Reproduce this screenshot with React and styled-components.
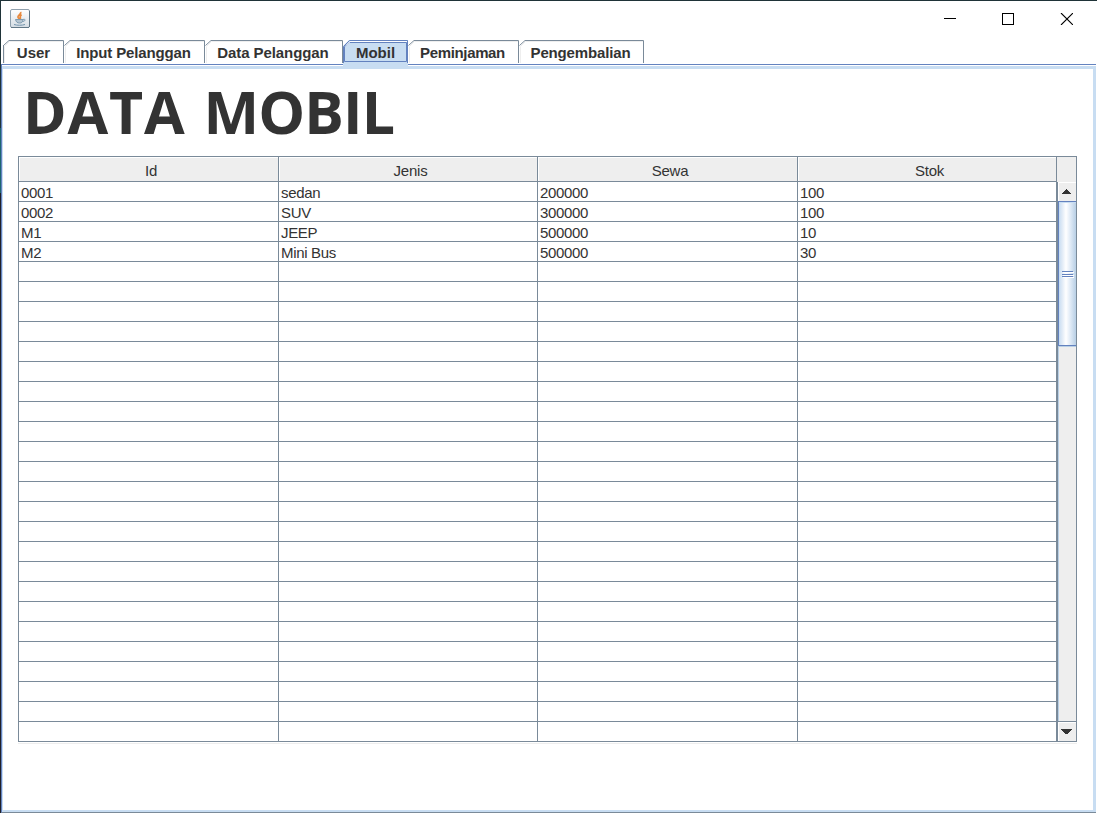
import React from "react";
import styled, { createGlobalStyle } from "styled-components";

const Global = createGlobalStyle`
  *, *::before, *::after { box-sizing: border-box; }
  html, body { margin: 0; background: #fff; overflow: hidden; }
`;

const steel = "#7a8a99";
const blue = "#6382bf";
const pale = "#c8ddf2";

const Desktop = styled.div`
  display: flex;
  width: 1097px;
  height: 813px;
  border-top: 1px solid #1f3338;
  background: #fff;
  color: #333;
  font-family: "Liberation Sans", Arial, sans-serif;
`;
const DesktopEdge = styled.div`
  width: 1px;
  background: linear-gradient(#1f3338 0 127px, #1c6670 127px 192px, #202028 192px);
`;
const Window = styled.main`
  display: flex;
  flex-direction: column;
  width: 1096px;
  height: 812px;
`;
const TitleBar = styled.header`
  display: flex;
  justify-content: space-between;
  height: 39px;
  padding: 8px 24px 0 9px;
`;
const Controls = styled.div`
  display: flex;
  gap: 46px;
  padding-top: 4px;
`;
const TabStrip = styled.nav`
  display: flex;
  height: 24px;
  padding-left: 2px;
`;
const TabBox = styled.div`
  position: relative;
  width: ${(p) => p.$w}px;
  height: ${(p) => (p.$active ? 27 : 23)}px;
  z-index: ${(p) => (p.$active ? 1 : 0)};
  padding-right: ${(p) => (p.$ls ? 2 : 0)}px;
  line-height: 26px;
  font-size: 15px;
  font-weight: 700;
  text-align: center;
  white-space: nowrap;
  svg { position: absolute; left: 0; top: 0; }
  span { position: relative; letter-spacing: ${(p) => p.$ls || 0}px; }
`;
const Pane = styled.section`
  flex: 1;
  display: flex;
  flex-direction: column;
  margin-right: 1px;
  border-top: 1px solid ${blue};
  border-left: 1px solid ${blue};
  border-bottom: 1px solid ${steel};
`;
const PaneInner = styled.div`
  flex: 1;
  margin-top: 1px;
  border: solid ${pale};
  border-width: 3px 3px 2px 1px;
  padding: 0 0 0 15px;
`;
const Heading = styled.h1`
  display: flex;
  gap: 18px;
  margin: 0;
  height: 87px;
  padding-left: 5px;
  font: 700 59px/85px "Open Sans", sans-serif;
  white-space: nowrap;
`;
const Word = styled.span`
  letter-spacing: ${(p) => p.$ls}px;
`;
const ScrollPane = styled.div`
  display: flex;
  width: 1059px;
  height: 586px;
  border-top: 1px solid ${steel};
  border-left: 1px solid ${steel};
  box-shadow: 0 1px #fff, 0 2px #eee;
`;
const Table = styled.div`
  width: 1038px;
`;
const Row = styled.div`
  display: grid;
  grid-template-columns: 260px 259px 260px 259px;
  grid-template-rows: 100%;
  height: ${(p) => (p.$head ? 25 : 20)}px;
`;
const HeadCell = styled.div`
  border-right: 1px solid ${steel};
  border-bottom: 1px solid ${steel};
  background: #eee;
  box-shadow: inset 1px 1px #fff;
  padding-left: 5px;
  text-align: center;
  font-size: 15px;
  line-height: 27px;
  letter-spacing: -0.2px;
`;
const Cell = styled.div`
  border-right: 1px solid ${steel};
  border-bottom: 1px solid ${steel};
  padding-left: 2px;
  font-size: 15px;
  line-height: 21px;
  letter-spacing: -0.33px;
  white-space: pre;
`;
const Side = styled.div`
  display: flex;
  flex-direction: column;
  width: 20px;
`;
const Corner = styled.div`
  height: 25px;
  border-right: 1px solid ${steel};
  background: #eee;
`;
const Scrollbar = styled.div`
  flex: 1;
  display: flex;
  flex-direction: column;
  border-left: 1px solid ${steel};
  border-right: 1px solid ${steel};
  background: #eee;
`;
const Arrow = styled.div`
  display: flex;
  justify-content: center;
  align-items: center;
  height: ${(p) => (p.$down ? 20 : 19)}px;
  padding-right: 2px;
  border-bottom: ${(p) => (p.$down ? `1px solid ${steel}` : "0")};
  box-shadow: inset 1px 1px #fff;
`;
const Thumb = styled.div`
  display: flex;
  justify-content: center;
  height: 145px;
  padding-top: 69px;
  border-top: 1px solid ${blue};
  border-bottom: 1px solid ${blue};
  border-left: 1px solid ${blue};
  background: linear-gradient(90deg, #c8ddf2 0, #dfeaf6 3px, #fff 7px, #e2ecf7 11px, #b8cfe5 100%);
  box-shadow: inset 1px 1px ${pale};
`;
const Track = styled.div`
  flex: 1;
  border-bottom: 1px solid ${steel};
  box-shadow: inset 1px 0 #b8cfe5, inset 0 1px #b8cfe5;
`;

const tabs = [
  { label: "User", w: 61 },
  { label: "Input Pelanggan", w: 141, ls: -0.13 },
  { label: "Data Pelanggan", w: 138, ls: -0.08 },
  { label: "Mobil", w: 65, active: true },
  { label: "Peminjaman", w: 111, ls: -0.35 },
  { label: "Pengembalian", w: 125, ls: -0.15 },
];
const columns = ["Id", "Jenis", "Sewa", "Stok"];
const cars = [
  ["0001", "sedan", "200000", "100"],
  ["0002", "SUV", "300000", "100"],
  ["M1", "JEEP", "500000", "10"],
  ["M2", "Mini Bus", "500000", "30"],
];
const rows = Array.from({ length: 28 }, (_, i) => cars[i] || ["", "", "", ""]);

function Tab({ label, w, active, first, ls }) {
  return (
    <TabBox $w={w} $active={active} $ls={ls}>
      {active ? (
        <svg width={w} height="27">
          <path d={`M0 27V6L6 0H${w}V27Z`} fill={pale} />
          <path d={`M.5 23V6.5L6.5 .5H${w - 0.5}V23`} fill="none" stroke={blue} />
          <path d={`M1.5 21.5V6.5L6.5 2.5H${w - 1.5}V21.5Z`} fill="none" stroke={blue} />
          <path d={`M3 5.5L7 1.5H${w - 1}`} fill="none" stroke="#fff" />
        </svg>
      ) : (
        <svg width={w} height="24">
          <path d={`M1.5 23V6.5L6.5 1.5H${w - 1}`} fill="none" stroke="#eee" />
          <path d={`M.5 5.5L6 .5H${w - 0.5}V23`} fill="none" stroke={steel} />
          {first && <path d="M.5 5V23" stroke={steel} />}
        </svg>
      )}
      <span>{label}</span>
    </TabBox>
  );
}

function JavaIcon() {
  return (
    <svg width="20" height="20" viewBox="0 0 20 20" fill="none">
      <defs>
        <linearGradient id="plate" x1="0" y1="0" x2="0" y2="1">
          <stop stopColor="#fff" />
          <stop offset="1" stopColor="#d4dce3" />
        </linearGradient>
      </defs>
      <rect x=".5" y=".5" width="19" height="18" rx="1.5" fill="url(#plate)" stroke="#8fa0ad" />
      <path d="M1 18.5H19M19.5 2V18" stroke="#617786" />
      <path d="M10.5 3C12 5 7 6 8 8.5L9.5 10M11.5 5.5C9.5 7 10 8 10.5 10" stroke="#e8883c" strokeWidth="1.7" />
      <path d="M5.5 10.5H13C12.7 13.5 11.5 14 9.5 14S6 13 5.5 10.5Z" fill="#b4c4d0" stroke="#7f9bb0" />
      <path d="M13 10.5C16 9.5 15.5 12.5 12.5 12.5M4 15.5C7 16.5 12 16.5 15 15.5" stroke="#7293ab" />
    </svg>
  );
}

export default function App() {
  return (
    <Desktop>
      <Global />
      <DesktopEdge />
      <Window>
        <TitleBar>
          <JavaIcon />
          <Controls>
            <svg width="12" height="12"><path d="M0 5.5H12" stroke="#000" /></svg>
            <svg width="12" height="12"><rect x=".5" y=".5" width="11" height="11" fill="none" stroke="#000" /></svg>
            <svg width="13" height="12"><path d="M1 0L13 12M13 0L1 12" stroke="#000" strokeWidth="1.1" /></svg>
          </Controls>
        </TitleBar>
        <TabStrip>
          {tabs.map((t, i) => <Tab key={t.label} {...t} first={i === 0} />)}
        </TabStrip>
        <Pane>
          <PaneInner>
            <Heading>
              <Word $ls={0.8}>DATA</Word>
              <Word $ls={-0.9}>MOBIL</Word>
            </Heading>
            <ScrollPane>
              <Table>
                <Row $head>
                  {columns.map((c) => <HeadCell key={c}>{c}</HeadCell>)}
                </Row>
                {rows.map((r, i) => (
                  <Row key={i}>
                    {r.map((v, j) => <Cell key={j}>{v}</Cell>)}
                  </Row>
                ))}
              </Table>
              <Side>
                <Corner />
                <Scrollbar>
                  <Arrow>
                    <svg width="9" height="5"><path d="M0 5V4H1V3H2V2H3V1H4V0H5V1H6V2H7V3H8V4H9V5Z" fill="#333" /></svg>
                  </Arrow>
                  <Thumb>
                    <svg width="12" height="8">
                      <path d="M1 1.5H12M1 4.5H12M1 6.5H12" stroke="#fff" />
                      <path d="M0 .5H11M0 3.5H11M0 5.5H11" stroke={blue} />
                    </svg>
                  </Thumb>
                  <Track />
                  <Arrow $down>
                    <svg width="11" height="5"><path d="M0 0H11V1H10V2H9V3H8V4H7V5H4V4H3V3H2V2H1V1H0Z" fill="#333" /></svg>
                  </Arrow>
                </Scrollbar>
              </Side>
            </ScrollPane>
          </PaneInner>
        </Pane>
      </Window>
    </Desktop>
  );
}
